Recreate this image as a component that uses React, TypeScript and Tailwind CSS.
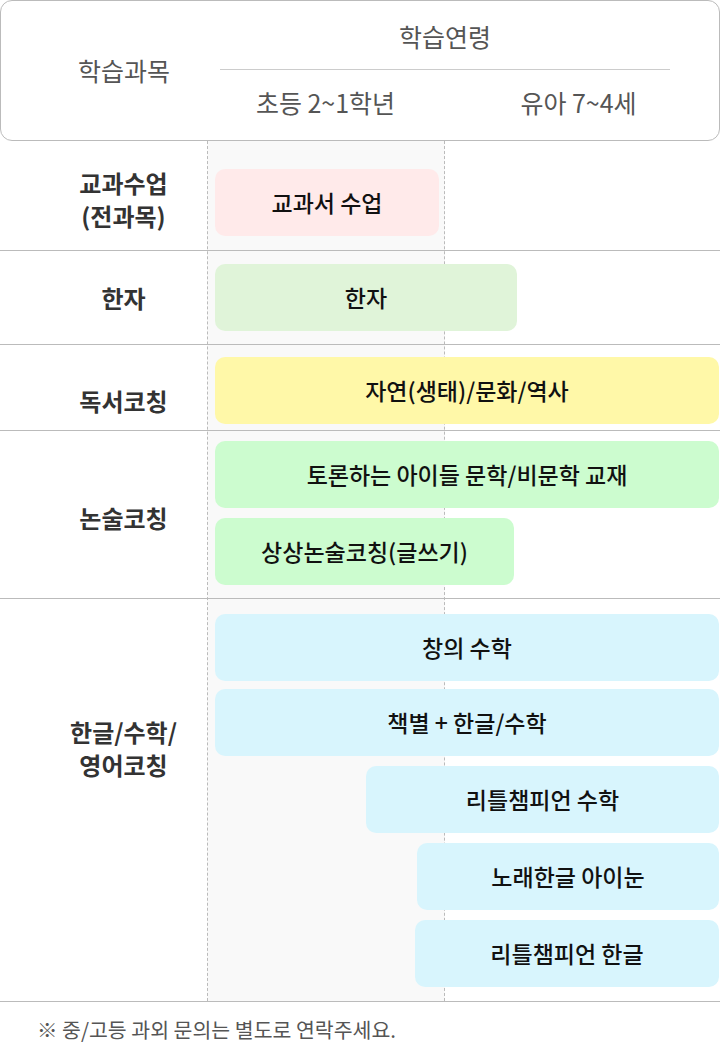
const font = { fontFamily: '"Noto Sans CJK KR", "Noto Sans", sans-serif' };

type Bar = { text: string; width: string; offset: string; color: string; mt: string };

type Row = {
  label: string[];
  height: string;
  labelPad: string;
  bars: Bar[];
};

const rows: Row[] = [
  {
    label: ["교과수업", "(전과목)"],
    height: "h-[110px]",
    labelPad: "pt-[6px]",
    bars: [{ text: "교과서 수업", width: "w-[224px]", offset: "ml-0", color: "bg-[#ffeaea]", mt: "mt-[28px]" }],
  },
  {
    label: ["한자"],
    height: "h-[94px]",
    labelPad: "",
    bars: [{ text: "한자", width: "w-[302px]", offset: "ml-0", color: "bg-[#e0f4d9]", mt: "mt-[13px]" }],
  },
  {
    label: ["독서코칭"],
    height: "h-[86px]",
    labelPad: "pt-[26px]",
    bars: [{ text: "자연(생태)/문화/역사", width: "w-[504px]", offset: "ml-0", color: "bg-[#fff8a8]", mt: "mt-[12px]" }],
  },
  {
    label: ["논술코칭"],
    height: "h-[168px]",
    labelPad: "pt-[6px]",
    bars: [
      { text: "토론하는 아이들 문학/비문학 교재", width: "w-[504px]", offset: "ml-0", color: "bg-[#ccfccf]", mt: "mt-[10px]" },
      { text: "상상논술코칭(글쓰기)", width: "w-[299px]", offset: "ml-0", color: "bg-[#ccfccf]", mt: "mt-[10px]" },
    ],
  },
  {
    label: ["한글/수학/", "영어코칭"],
    height: "h-[403px]",
    labelPad: "pb-[104px]",
    bars: [
      { text: "창의 수학", width: "w-[504px]", offset: "ml-0", color: "bg-[#d8f5fd]", mt: "mt-[15px]" },
      { text: "책별 + 한글/수학", width: "w-[504px]", offset: "ml-0", color: "bg-[#d8f5fd]", mt: "mt-[8px]" },
      { text: "리틀챔피언 수학", width: "w-[353px]", offset: "ml-[151px]", color: "bg-[#d8f5fd]", mt: "mt-[10px]" },
      { text: "노래한글 아이눈", width: "w-[302px]", offset: "ml-[202px]", color: "bg-[#d8f5fd]", mt: "mt-[10px]" },
      { text: "리틀챔피언 한글", width: "w-[304px]", offset: "ml-[200px]", color: "bg-[#d8f5fd]", mt: "mt-[10px]" },
    ],
  },
];

export default function App() {
  return (
    <div className="w-[720px] bg-white" style={font}>
      {/* header */}
      <div className="flex h-[141px] rounded-[12px] border border-[#bbbbbb] text-[25px] text-[#555]">
        <div className="flex w-[206px] items-center justify-center pl-[40px]">
          <span>학습과목</span>
        </div>
        <div className="flex flex-1 flex-col">
          <div className="ml-[13px] mr-[49px] flex h-[69px] items-center justify-center border-b border-[#cccccc] pt-[4px]">
            학습연령
          </div>
          <div className="flex flex-1 items-center pb-[4px]">
            <div className="w-[237px] text-center">초등 2~1학년</div>
            <div className="flex-1 pr-[6px] text-center">유아 7~4세</div>
          </div>
        </div>
      </div>

      {/* body */}
      <div className="relative">
        <div className="absolute bottom-[1px] left-[207px] top-0 w-[238px] border-x border-dashed border-[#bbbbbb] bg-[#f9f9f9]" />
        {rows.map((row) => (
          <div key={row.label.join("")} className={`relative flex border-b border-[#bbbbbb] ${row.height}`}>
            <div
              className={`flex w-[207px] flex-col items-center justify-center pl-[40px] text-[24px] font-bold leading-[33px] text-[#333] ${row.labelPad}`}
            >
              {row.label.map((l) => (
                <span key={l}>{l}</span>
              ))}
            </div>
            <div className="flex flex-1 flex-col pl-[8px]">
              {row.bars.map((bar) => (
                <div
                  key={bar.text}
                  className={`flex h-[67px] items-center justify-center rounded-[10px] text-[23px] font-medium text-[#111] ${bar.width} ${bar.offset} ${bar.color} ${bar.mt}`}
                >
                  {bar.text}
                </div>
              ))}
            </div>
          </div>
        ))}
      </div>

      <p className="pl-[37px] pt-[12px] text-[20.5px] text-[#555]">※ 중/고등 과외 문의는 별도로 연락주세요.</p>
    </div>
  );
}
